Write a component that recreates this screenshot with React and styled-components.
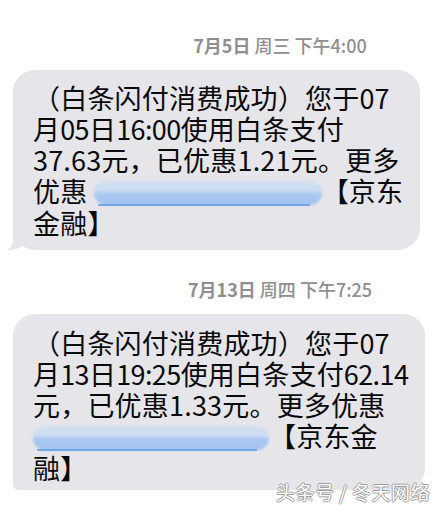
import React from 'react';
import styled, { createGlobalStyle } from 'styled-components';

const Global = createGlobalStyle`
  html, body {
    margin: 0;
    padding: 0;
    background: #fff;
  }
  body {
    font-family: "Noto Sans CJK SC", "Noto Sans", sans-serif;
  }
`;

const Page = styled.div`
  position: relative;
  width: 439px;
  height: 507px;
  overflow: hidden;
  background: #fff;
`;

const Stamp = styled.div`
  display: flex;
  justify-content: center;
  padding-left: 121px;
  margin-top: ${(p) => p.top}px;
  font-size: 18px;
  line-height: 20px;
  color: #8e8e93;
  white-space: pre;
  b {
    font-weight: 700;
  }
  span {
    font-weight: 500;
  }
`;

const Bubble = styled.div`
  position: relative;
  margin-top: ${(p) => p.gap}px;
  margin-left: 13px;
  width: ${(p) => p.w}px;
  box-sizing: border-box;
  padding: ${(p) => p.pad};
  background: #e5e5ea;
  border-radius: ${(p) => (p.tail ? '22px' : '22px 22px 22px 6px')};
  color: #0a0a0a;
  font-size: 27px;
  line-height: 31px;
  letter-spacing: 0.2px;

  ${(p) =>
    p.tail &&
    `
    &::before {
      content: "";
      position: absolute;
      bottom: 0;
      left: -8px;
      width: 22px;
      height: 20px;
      background: #e5e5ea;
      border-bottom-right-radius: 18px 14px;
    }
    &::after {
      content: "";
      position: absolute;
      bottom: -1px;
      left: -13px;
      width: 13px;
      height: 22px;
      background: #fff;
      border-bottom-right-radius: 10px;
    }
  `}
`;

const Line = styled.div`
  position: relative;
  z-index: 1;
  white-space: nowrap;
`;

const Num = styled.span`
  letter-spacing: -0.6px;
`;

const Link = styled.span`
  display: inline-block;
  position: relative;
  width: ${(p) => p.w}px;
  height: 26px;
  vertical-align: -5px;
  &::before {
    content: "";
    position: absolute;
    inset: 0 0 2px 0;
    border-radius: 13px;
    background: linear-gradient(
      to bottom,
      #d3dff0 0%,
      #cbdcf3 40%,
      #a9c8f0 55%,
      #a2c3ef 100%
    );
    filter: blur(1.3px);
  }
  &::after {
    content: "";
    position: absolute;
    left: 4px;
    right: 12px;
    bottom: 1px;
    height: 2px;
    background: #4f92e4;
    opacity: 0.7;
    filter: blur(0.5px);
  }
`;

const Watermark = styled.div`
  position: absolute;
  left: 276px;
  top: 480px;
  font-size: 19px;
  line-height: 24px;
  color: #fff;
  letter-spacing: 0.5px;
  text-shadow:
    -1px 0 #a0a0a0,
    1px 0 #a0a0a0,
    0 -1px #a0a0a0,
    0 1px #a0a0a0;
`;

export default function App() {
  return (
    <Page>
      <Global />
      <Stamp top={35}>
        <b>7月5日</b>
        <span> 周三 下午4:00</span>
      </Stamp>
      <Bubble gap={15} w={407} pad="12px 10px 12px 20px" tail>
        <Line>（白条闪付消费成功）您于07</Line>
        <Line>
          月<Num>05</Num>日<Num>16:00</Num>使用白条支付
        </Line>
        <Line>37.63元，已优惠1.21元。更多</Line>
        <Line>
          优惠 <Link w={228} />【京东
        </Line>
        <Line>金融】</Line>
      </Bubble>
      <Stamp top={29}>
        <b>7月13日</b>
        <span> 周四 下午7:25</span>
      </Stamp>
      <Bubble gap={15} w={412} pad="13px 10px 7px 20px">
        <Line>（白条闪付消费成功）您于07</Line>
        <Line>
          月<Num>13</Num>日<Num>19:25</Num>使用白条支付<Num>62.14</Num>
        </Line>
        <Line>元，已优惠1.33元。更多优惠</Line>
        <Line>
          <Link w={236} />【京东金
        </Line>
        <Line>融】</Line>
      </Bubble>
      <Watermark>头条号 / 冬天网络</Watermark>
    </Page>
  );
}
